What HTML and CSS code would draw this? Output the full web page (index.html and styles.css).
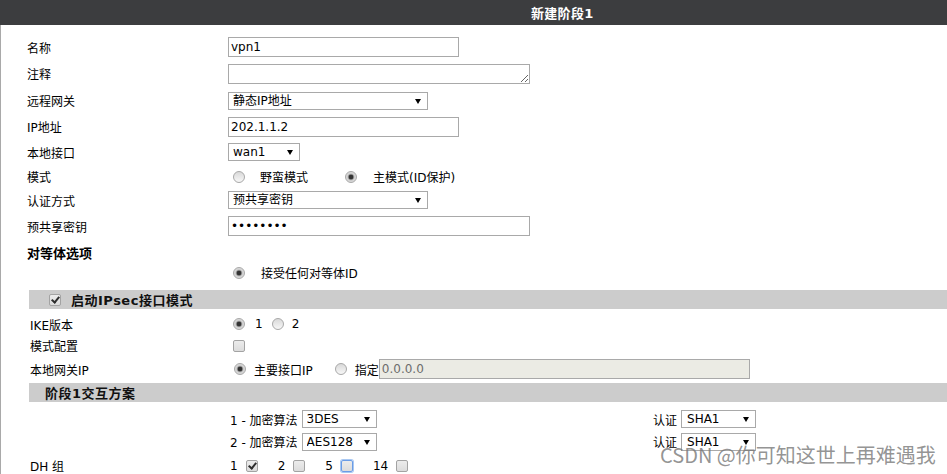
FILE: index.html
```html
<!DOCTYPE html>
<html lang="zh-CN">
<head>
<meta charset="utf-8">
<title>新建阶段1</title>
<link rel="stylesheet" href="styles.css">
</head>
<body>
<div class="page">
  <div class="titlebar"><span class="title">新建阶段1</span></div>
  <div class="body">
    <div class="form">
      <div class="row h26"><div class="lbl">名称</div><div class="ctl"><input class="txt w231" type="text" value="vpn1"></div></div>
      <div class="row h27"><div class="lbl">注释</div><div class="ctl"><textarea class="area w302"></textarea></div></div>
      <div class="row h27"><div class="lbl">远程网关</div><div class="ctl"><span class="sel"><select class="w200"><option>静态IP地址</option></select></span></div></div>
      <div class="row h25"><div class="lbl">IP地址</div><div class="ctl"><input class="txt w231" type="text" value="202.1.1.2"></div></div>
      <div class="row h26"><div class="lbl">本地接口</div><div class="ctl"><span class="sel"><select class="w72"><option>wan1</option></select></span></div></div>
      <div class="row h23"><div class="lbl">模式</div><div class="ctl"><input class="rd ml5" type="radio" name="mode"><span class="opt ml15">野蛮模式</span><input class="rd ml37" type="radio" name="mode" checked><span class="opt ml16">主模式(ID保护)</span></div></div>
      <div class="row h24"><div class="lbl">认证方式</div><div class="ctl"><span class="sel"><select class="w200"><option>预共享密钥</option></select></span></div></div>
      <div class="row h28"><div class="lbl">预共享密钥</div><div class="ctl"><input class="txt w302" type="password" value="12345678"></div></div>
      <div class="row h24"><div class="lbl head">对等体选项</div></div>
      <div class="row h17"><div class="lbl"></div><div class="ctl"><input class="rd ml5" type="radio" name="peer" checked><span class="opt ml16">接受任何对等体ID</span></div></div>
    </div>

    <div class="sect">
      <div class="bar bar1"><input class="cb" type="checkbox" checked><span class="bartext ml10">启动IPsec接口模式</span></div>
      <div class="row h24 mt3"><div class="lbl lbl2">IKE版本</div><div class="ctl"><input class="rd ml5" type="radio" name="ike" checked><span class="opt ml10">1</span><input class="rd ml9" type="radio" name="ike"><span class="opt ml8">2</span></div></div>
      <div class="row h19"><div class="lbl lbl2">模式配置</div><div class="ctl"><input class="cb ml5" type="checkbox"></div></div>
      <div class="row h28"><div class="lbl lbl2">本地网关IP</div><div class="ctl"><input class="rd ml6" type="radio" name="gw" checked><span class="opt ml8">主要接口IP</span><input class="rd ml22" type="radio" name="gw"><span class="opt ml8">指定</span><input class="txt dis w371 ml9" type="text" value="0.0.0.0" disabled></div></div>
      <div class="bar bar2"><span class="bartext">阶段1交互方案</span></div>
      <div class="row h22 mt6"><div class="lbl lbl2"></div><div class="ctl"><div class="grp1"><span class="opt">1 - 加密算法</span><span class="sel ml4"><select class="w75"><option>3DES</option></select></span></div><span class="opt">认证</span><span class="sel ml4"><select class="w75 pl5"><option>SHA1</option></select></span></div></div>
      <div class="row h23"><div class="lbl lbl2"></div><div class="ctl"><div class="grp1"><span class="opt">2 - 加密算法</span><span class="sel ml4"><select class="w75"><option>AES128</option></select></span></div><span class="opt">认证</span><span class="sel ml4"><select class="w75 pl5"><option>SHA1</option></select></span></div></div>
      <div class="row h25"><div class="lbl lbl2">DH 组</div><div class="ctl dh"><span class="opt">1</span><input class="cb dcb" type="checkbox" checked><span class="opt">2</span><input class="cb dcb" type="checkbox"><span class="opt">5</span><input class="cb dcb focus" type="checkbox"><span class="opt">14</span><input class="cb dcb" type="checkbox"></div></div>
    </div>
  </div>
  <div class="watermark">CSDN @你可知这世上再难遇我</div>
</div>
</body>
</html>
```

FILE: styles.css
```css
html, body {
  margin: 0;
  padding: 0;
  background: #fff;
  overflow: hidden;
}

body {
  font-family: "DejaVu Sans", "Noto Sans CJK SC", sans-serif;
  font-size: 12px;
  color: #000;
}

.page {
  position: relative;
  width: 947px;
  height: 474px;
  overflow: hidden;
}

.titlebar {
  height: 25px;
  background: #3c3d3f;
  display: flex;
  align-items: center;
  padding-left: 531px;
}

.title {
  color: #fff;
  font-weight: bold;
  font-size: 13px;
  letter-spacing: 0.3px;
  font-family: "DejaVu Sans", "Noto Sans CJK SC", sans-serif;
}

.body {
  border-left: 1px solid #a9a9a9;
  height: 449px;
}

.form {
  padding-top: 9px;
  padding-left: 26px;
}

.row {
  display: flex;
  align-items: center;
}

.h17 { height: 17px; }
.h19 { height: 19px; }
.h22 { height: 22px; }
.h23 { height: 23px; }
.h24 { height: 24px; }
.h25 { height: 25px; }
.h26 { height: 26px; }
.h27 { height: 27px; }
.h28 { height: 28px; }

.mt3 { margin-top: 3px; }
.mt6 { margin-top: 6px; }

.lbl {
  width: 201px;
  flex: none;
  white-space: nowrap;
}

.lbl2 {
  width: 198px;
  padding-left: 1px;
}

.lbl.head {
  font-weight: bold;
  font-size: 13px;
}

.ctl {
  display: flex;
  align-items: center;
  white-space: nowrap;
}

.ml4 { margin-left: 4px; }
.ml5 { margin-left: 5px; }
.ml6 { margin-left: 6px; }
.ml8 { margin-left: 8px; }
.ml9 { margin-left: 9px; }
.ml10 { margin-left: 10px; }
.ml15 { margin-left: 15px; }
.ml16 { margin-left: 16px; }
.ml22 { margin-left: 22px; }
.ml37 { margin-left: 37px; }

.txt, .area, select {
  box-sizing: border-box;
  border: 1px solid #a9a9a9;
  border-radius: 0;
  background: #fff;
  font-family: "DejaVu Sans", "Noto Sans CJK SC", sans-serif;
  font-size: 12px;
  color: #000;
  margin: 0;
  outline: none;
}

.txt {
  height: 20px;
  padding: 0 2px;
}

.area {
  height: 20px;
  padding: 0 2px;
  resize: both;
  display: block;
}

.dis {
  background: #ebebe4;
  color: #6d6d6d;
}

.w72 { width: 72px; }
.w75 { width: 75px; }
.w200 { width: 200px; }
.w231 { width: 231px; }
.w302 { width: 302px; }
.w371 { width: 371px; }

.sel {
  position: relative;
  display: inline-block;
  line-height: 0;
}

.sel::after {
  content: "";
  position: absolute;
  right: 7px;
  top: 7px;
  border-left: 3px solid transparent;
  border-right: 3px solid transparent;
  border-top: 5px solid #000;
  pointer-events: none;
}

select {
  -webkit-appearance: none;
  appearance: none;
  height: 18px;
  padding: 0 0 0 4px;
  line-height: 16px;
}

select.pl5 {
  padding-left: 5px;
}

.rd {
  -webkit-appearance: none;
  appearance: none;
  box-sizing: border-box;
  width: 12px;
  height: 12px;
  margin-top: 0;
  margin-bottom: 0;
  margin-right: 0;
  border: 1px solid #a8a8a8;
  border-radius: 50%;
  background: linear-gradient(#d9d9d9, #f7f7f7);
  flex: none;
}

.rd:checked {
  background: radial-gradient(circle at center, #333 0, #333 2px, #8c8c8c 2.6px, #cfcfcf 3.6px, #eeeeee 100%);
}

.cb {
  -webkit-appearance: none;
  appearance: none;
  box-sizing: border-box;
  position: relative;
  width: 12px;
  height: 12px;
  margin-top: 0;
  margin-bottom: 0;
  margin-right: 0;
  border: 1px solid #a3a3a3;
  border-radius: 2px;
  background: linear-gradient(#ececec, #dcdcdc);
  flex: none;
}

.cb:checked::after {
  content: "";
  position: absolute;
  left: 3px;
  top: 0px;
  width: 3px;
  height: 6px;
  border: solid #2e2e2e;
  border-width: 0 2px 2px 0;
  transform: rotate(40deg);
}

.cb.focus {
  border: 1px solid #6a9ce6;
  box-shadow: 0 0 0 1px #a9c8f2;
}

.sect {
  margin-left: 28px;
}

.bar {
  height: 19px;
  background: #cccccc;
  display: flex;
  align-items: center;
}

.bar1 {
  margin-top: 9px;
  padding-left: 20px;
}

.bar2 {
  padding-left: 16px;
}

.bar1 .cb {
  margin-left: 0;
}

.bartext {
  font-weight: bold;
  font-size: 13px;
  letter-spacing: 0.5px;
  color: #111;
}

.grp1 {
  width: 423px;
  padding-left: 2px;
  display: flex;
  align-items: center;
  flex: none;
}

.dh {
  padding-left: 2px;
}

.dcb {
  margin-left: 8px;
  margin-right: 20px;
}

.watermark {
  position: absolute;
  left: 660px;
  top: 442px;
  font-family: "Noto Sans CJK SC", sans-serif;
  font-size: 20px;
  line-height: 26px;
  color: rgba(120, 120, 120, 0.8);
  white-space: nowrap;
  pointer-events: none;
}
```
